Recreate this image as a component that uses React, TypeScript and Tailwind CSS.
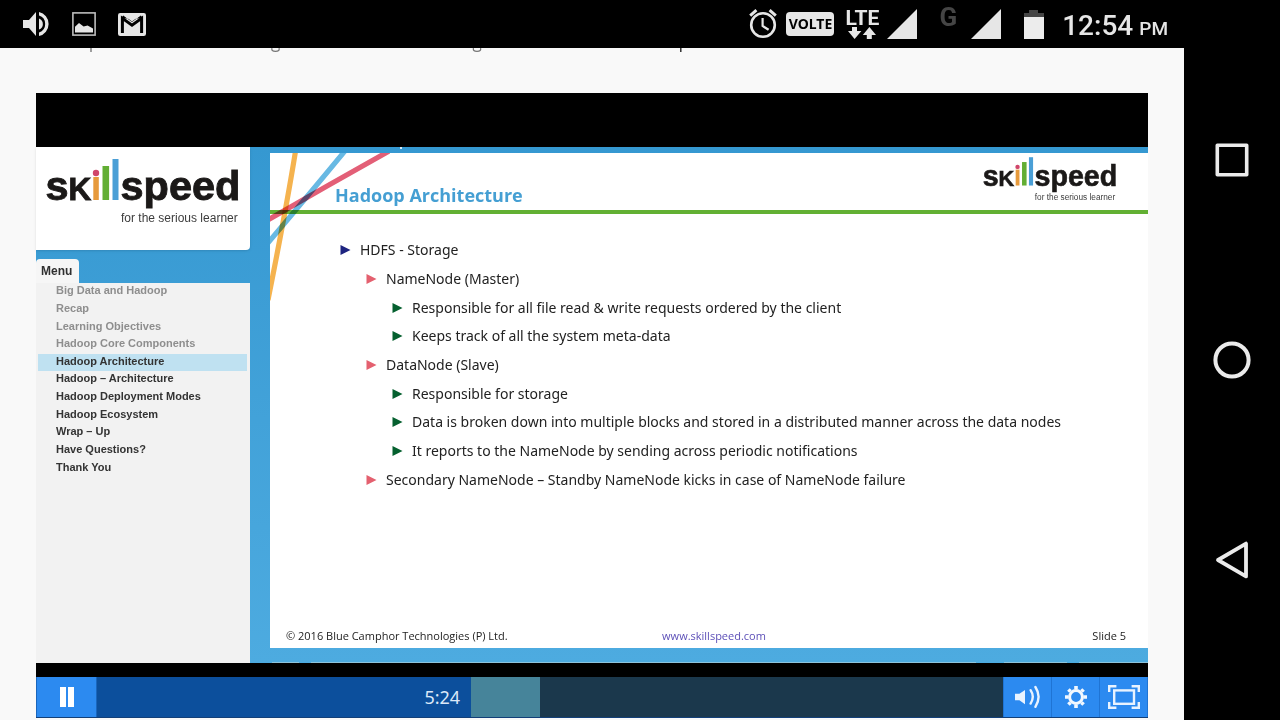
import React from 'react';

const chapters = [
  { title: 'Big Data and Hadoop', seen: true },
  { title: 'Recap', seen: true },
  { title: 'Learning Objectives', seen: true },
  { title: 'Hadoop Core Components', seen: true },
  { title: 'Hadoop Architecture', current: true },
  { title: 'Hadoop – Architecture' },
  { title: 'Hadoop Deployment Modes' },
  { title: 'Hadoop Ecosystem' },
  { title: 'Wrap – Up' },
  { title: 'Have Questions?' },
  { title: 'Thank You' },
];

const points = [
  { level: 0, text: 'HDFS - Storage' },
  { level: 1, text: 'NameNode (Master)' },
  { level: 2, text: 'Responsible for all file read & write requests ordered by the client' },
  { level: 2, text: 'Keeps track of all the system meta-data' },
  { level: 1, text: 'DataNode (Slave)' },
  { level: 2, text: 'Responsible for storage' },
  { level: 2, text: 'Data is broken down into multiple blocks and stored in a distributed manner across the data nodes' },
  { level: 2, text: 'It reports to the NameNode by sending across periodic notifications' },
  { level: 1, text: 'Secondary NameNode – Standby NameNode kicks in case of NameNode failure' },
];

const levelStyles = [
  { indent: 'pl-[70px]', marker: 'text-[#1d2480]' },
  { indent: 'pl-24', marker: 'text-[#e4606f]' },
  { indent: 'pl-[122px]', marker: 'text-[#05602f]' },
];

function Logo({ className }: { className: string }) {
  return (
    <svg viewBox="0 0 194 66" className={className} role="img" aria-label="Skillspeed, for the serious learner">
      <g fill="#1b1918" stroke="#1b1918" strokeWidth="0.9" fontFamily="'Liberation Sans', Arial, sans-serif" fontWeight="700">
        <text x="-0.5" y="41" fontSize="41.5">s</text>
        <text x="22.5" y="41" fontSize="31.5">K</text>
        <text x="74.5" y="41" fontSize="41.5">speed</text>
      </g>
      <circle cx="50" cy="14" r="3.2" fill="#d0466a" />
      <rect x="47.3" y="18" width="5.5" height="23" fill="#e79a3c" />
      <rect x="56.5" y="7" width="6.6" height="34" fill="#62ae34" />
      <rect x="66.5" y="0" width="6" height="41" fill="#4a9fd6" />
      <text x="75" y="62.500" fontSize="12" fontWeight="400" fill="#3c3c3c" fontFamily="'Liberation Sans', Arial, sans-serif">
        for the serious learner
      </text>
    </svg>
  );
}

function Signal() {
  return (
    <svg viewBox="0 0 30 30" className="size-[30px]" fill="#e6e6e6" aria-hidden="true">
      <path d="M30 0V30H0z" />
    </svg>
  );
}

function StatusBar() {
  return (
    <header className="flex h-12 shrink-0 items-center justify-between bg-black pr-28 pl-[23px] font-['Roboto',sans-serif] text-[#e6e6e6]">
      <div className="flex items-center gap-[22px]">
        <svg viewBox="0 0 27 26" className="h-[26px] w-[27px]" fill="#e6e6e6" aria-hidden="true">
          <path d="M0 9h6l7-8v24l-7-8H0z" />
          <path d="M16 7.4a6 6 0 0 1 0 11.2z" />
          <path d="M16 1a12.3 12.3 0 0 1 0 24v-3.6a8.8 8.8 0 0 0 0-16.8z" />
        </svg>
        <svg viewBox="0 0 24 24" className="size-6" aria-hidden="true">
          <rect x="0.9" y="0.9" width="22.2" height="22.2" fill="none" stroke="#bdbdbd" strokeWidth="1.6" />
          <path d="M3 20.5v-5.7l4-3.8 4.6 3.6 4-1.2 5.4 3v4.1z" fill="#e6e6e6" />
        </svg>
        <svg viewBox="0 0 28 23" className="h-[23px] w-7" aria-hidden="true">
          <rect width="28" height="23" rx="2.2" fill="#e6e6e6" />
          <path d="M4.4 20V5.4L14 12.2l9.6-6.8V20" fill="none" stroke="#000" strokeWidth="3" />
          <path d="M3 5.6L5.2 2.6 14 9l8.8-6.4L25 5.6" fill="#000" />
          <path d="M6 2.5L14 8.6l8-6.1z" fill="#e6e6e6" />
        </svg>
      </div>
      <div className="flex items-center">
        <svg viewBox="0 0 28 30" className="h-[30px] w-7" fill="none" stroke="#e6e6e6" aria-hidden="true">
          <circle cx="14" cy="16" r="11.8" strokeWidth="2.6" />
          <path d="M1.2 6.6L7.4 1.2M26.8 6.6L20.6 1.2" strokeWidth="3" />
          <path d="M13.6 9v8l6 3.8" strokeWidth="2.2" />
        </svg>
        <span className="ml-[9px] flex h-6 w-12 items-center justify-center rounded bg-[#e6e6e6] font-['Noto_Sans',sans-serif] text-sm font-bold text-black">
          VOLTE
        </span>
        <span className="ml-[11px] flex w-[34px] flex-col items-center">
          <span className="text-[21px] leading-[18px] font-bold">LTE</span>
          <svg viewBox="0 0 28 12" className="h-3 w-7" fill="#e6e6e6" aria-hidden="true">
            <path d="M4 0h5v4h4.4L6.6 12 0 4h4zM18.8 12h5V8H28L21.4 0l-6.6 8h4z" />
          </svg>
        </span>
        <span className="ml-2">
          <Signal />
        </span>
        <span className="ml-[22px] pb-[14px] text-[26px] leading-none font-bold text-[#454545]">G</span>
        <span className="ml-[14px]">
          <Signal />
        </span>
        <svg viewBox="0 0 20 29" className="ml-[23px] h-[29px] w-5" aria-hidden="true">
          <path d="M0 3h5V0h9v3h6v5H0z" fill="#454545" />
          <path d="M0 7h20v22H0z" fill="#ececec" />
        </svg>
        <span className="ml-[18px] flex items-baseline gap-[6px] pt-[6px] text-[28px] leading-8 font-medium">
          12:54 <span className="text-[19px]">PM</span>
        </span>
      </div>
    </header>
  );
}

function NavigationBar() {
  return (
    <nav className="flex w-24 shrink-0 flex-col items-center bg-black pt-[92px]" aria-label="System">
      <div className="flex flex-col gap-[160px]">
        <button type="button" aria-label="Recent apps" className="size-10">
          <svg viewBox="0 0 40 40" fill="none" stroke="#ebebeb" strokeWidth="3.6" strokeLinejoin="round">
            <rect x="5.3" y="5.3" width="29.4" height="29.4" />
          </svg>
        </button>
        <button type="button" aria-label="Home" className="size-10">
          <svg viewBox="0 0 40 40" fill="none" stroke="#ebebeb" strokeWidth="4">
            <circle cx="20" cy="20" r="16.6" />
          </svg>
        </button>
        <button type="button" aria-label="Back" className="size-10">
          <svg viewBox="0 0 40 40" fill="none" stroke="#ebebeb" strokeWidth="3.8" strokeLinejoin="round">
            <path d="M34 3.6V36.4L6 20z" />
          </svg>
        </button>
      </div>
    </nav>
  );
}

function Sidebar() {
  return (
    <aside className="flex w-[214px] shrink-0 flex-col font-['Liberation_Sans',Arial,sans-serif] font-bold">
      <div className="h-[103px] rounded-br bg-white px-[10px] pt-3 shadow-sm">
        <Logo className="h-[66px] w-[194px] overflow-visible" />
      </div>
      <h2 className="mt-[9px] h-6 w-[43px] rounded-t bg-[#f6f6f6] pl-[5px] text-xs leading-6 text-[#303030]">Menu</h2>
      <div className="flex-1 bg-[#f2f2f2] px-[2px] pr-[3px] text-[11px]">
        <ul className="grid h-[194px] auto-rows-fr">
          {chapters.map((c) => (
            <li key={c.title} className={c.current ? 'flex bg-[#bfe1f1]' : 'flex'}>
              <a
                href="#slide"
                aria-current={c.current ? 'true' : undefined}
                className={c.seen ? 'flex items-center pb-[2px] pl-[18px] leading-none text-[#8e8e8e]' : 'flex items-center pb-[2px] pl-[18px] leading-none text-[#333]'}
              >
                {c.title}
              </a>
            </li>
          ))}
        </ul>
      </div>
    </aside>
  );
}

function Slide() {
  return (
    <article id="slide" className="relative flex flex-1 flex-col bg-white font-['Open_Sans',sans-serif] text-[#222]">
      <div className="flex h-[57px] justify-between pr-[31px] pl-[65px]">
        <h1 className="pt-[30px] text-lg leading-6 font-bold text-[#459fd3]">Hadoop Architecture</h1>
        <Logo className="mt-1 h-[46px] w-[134px] overflow-visible" />
      </div>
      <div className="h-1 bg-[#62b033]" />
      <svg viewBox="0 0 120 150" className="pointer-events-none absolute top-0 left-0 h-[150px] w-[120px]" fill="none" aria-hidden="true">
        <g strokeWidth="5.2">
          <path d="M26.5 -8Q17 52 -2 147" stroke="#f5b34f" className="mix-blend-multiply" />
          <path d="M79 -7Q42 38 -3 91" stroke="#68b9e3" className="mix-blend-multiply" />
          <path d="M130 -8Q62 30 -4 68" stroke="#e35f77" className="mix-blend-multiply" />
        </g>
      </svg>
      <ul className="mt-[22px] grid h-[258px] auto-rows-fr font-['Noto_Sans','Open_Sans',sans-serif] text-sm">
        {points.map((p) => {
          const s = levelStyles[p.level];
          return (
            <li key={p.text} className={`flex items-center gap-[9px] ${s.indent}`}>
              <svg viewBox="0 0 11 10" className={`h-[10px] w-[11px] shrink-0 ${s.marker}`} fill="currentColor" aria-hidden="true">
                <path d="M0.5 0L10.5 5L0.5 10z" />
              </svg>
              <span>{p.text}</span>
            </li>
          );
        })}
      </ul>
      <footer className="mt-auto grid grid-cols-3 items-center pr-[22px] pb-1 pl-4 text-[11px] leading-4">
        <span>© 2016 Blue Camphor Technologies (P) Ltd.</span>
        <a href="#site" className="pl-4 text-center text-[#5d50b8]">www.skillspeed.com</a>
        <span className="text-right">Slide 5</span>
      </footer>
    </article>
  );
}

function Controls() {
  return (
    <div className="flex h-[41px] border-b border-[#123f78] bg-[#1b384c]">
      <button type="button" aria-label="Pause" className="flex w-[61px] items-center justify-center border-r border-l border-[#1a66bd] bg-[#2c8af0]">
        <svg viewBox="0 0 14 20" className="h-5 w-[14px]" fill="#fff">
          <path d="M0 0h6v20H0zM8 0h6v20H8z" />
        </svg>
      </button>
      <div className="relative flex flex-1">
        <div className="flex w-[41.3%] items-center justify-end bg-[#0c4f9c] pr-[11px] font-['Noto_Sans',sans-serif] text-lg text-[#dbe8f8]">
          5:24
        </div>
        <div className="w-[7.6%] bg-[#46849a]" />
        <input type="range" aria-label="Seek" min={0} max={1000} defaultValue={413} className="absolute inset-0 size-full cursor-pointer opacity-0" />
      </div>
      <div className="flex w-[145px] divide-x divide-[#1f74d4] border-r border-l border-[#1f74d4] bg-[#2c8af0]">
        <button type="button" aria-label="Volume" className="flex flex-1 items-center justify-center">
          <svg viewBox="0 0 26 24" className="h-6 w-[26px]" fill="#e9f3ff">
            <path d="M0 8.8h4.4L10 5v14.2l-5.600-4H0z" />
            <path d="M15.6 5.2q4.400 6.600 0 13.400M20.400 2q6.400 9.800 0 19.800" fill="none" stroke="#e9f3ff" strokeWidth="2.4" strokeLinecap="round" />
          </svg>
        </button>
        <button type="button" aria-label="Settings" className="flex flex-1 items-center justify-center">
          <svg viewBox="-12 -12 24 24" className="size-6" stroke="#f2f8ff" fill="none">
            <circle r="6.4" strokeWidth="3" />
            <path
              d="M0-7.4V-11M0 7.4V11M7.4 0H11M-7.4 0H-11M5.4-5.4L7.6-7.6M-5.4 5.4L-7.6 7.6M5.4 5.4L7.6 7.6M-5.4-5.4L-7.6-7.6"
              strokeWidth="3.6"
            />
          </svg>
        </button>
        <button type="button" aria-label="Full screen" className="flex flex-1 items-center justify-center">
          <svg viewBox="0 0 32 24" className="h-6 w-8" fill="none" stroke="#e9f3ff" strokeWidth="2.4">
            <rect x="6.2" y="5.4" width="19.8" height="13.4" />
            <path d="M1.2 7V1.2H8.4M23.6 1.2H30.8V7M30.8 17V22.8H23.6M8.4 22.8H1.2V17" />
          </svg>
        </button>
      </div>
    </div>
  );
}

export default function App() {
  return (
    <div className="flex min-h-screen flex-col bg-black">
      <StatusBar />
      <div className="flex flex-1">
        <main className="flex min-w-0 flex-1 flex-col bg-[#f9f9f9] px-9 pb-[2px]">
          <svg viewBox="0 0 660 5" className="h-[5px] w-[660px]" fill="none" stroke="#777" aria-hidden="true">
            <path d="M55 0V4" strokeWidth="1.4" />
            <path d="M236 0Q235 3.4 239.5 3.4T243 0M437.5 0Q436.5 3.4 441 3.4T444.5 0" strokeWidth="1.2" />
            <path d="M644.8 0V4" stroke="#222" strokeWidth="1.4" />
          </svg>
          <section aria-label="Video player" className="mt-10 flex flex-1 flex-col bg-black pt-[54px]">
            <div className="mb-[14px] flex flex-1 bg-linear-to-b from-[#3598d1] to-[#4dabe0]">
              <Sidebar />
              <div className="flex flex-1 flex-col pl-5">
                <div className="h-[6px] pl-[130px]">
                  <div className="size-[2px] bg-white/80" />
                </div>
                <Slide />
                <div className="flex h-[15px] items-end pl-[2px]">
                  <div className="h-px w-[27px] bg-[#8ec4dc]" />
                  <div className="ml-3 h-px flex-1 bg-[#8ec4dc]" />
                  <div className="ml-7 h-px w-[63px] bg-[#8ec4dc]" />
                  <div className="ml-3 h-px w-[69px] bg-[#8ec4dc]" />
                </div>
              </div>
            </div>
            <Controls />
          </section>
        </main>
        <NavigationBar />
      </div>
    </div>
  );
}
